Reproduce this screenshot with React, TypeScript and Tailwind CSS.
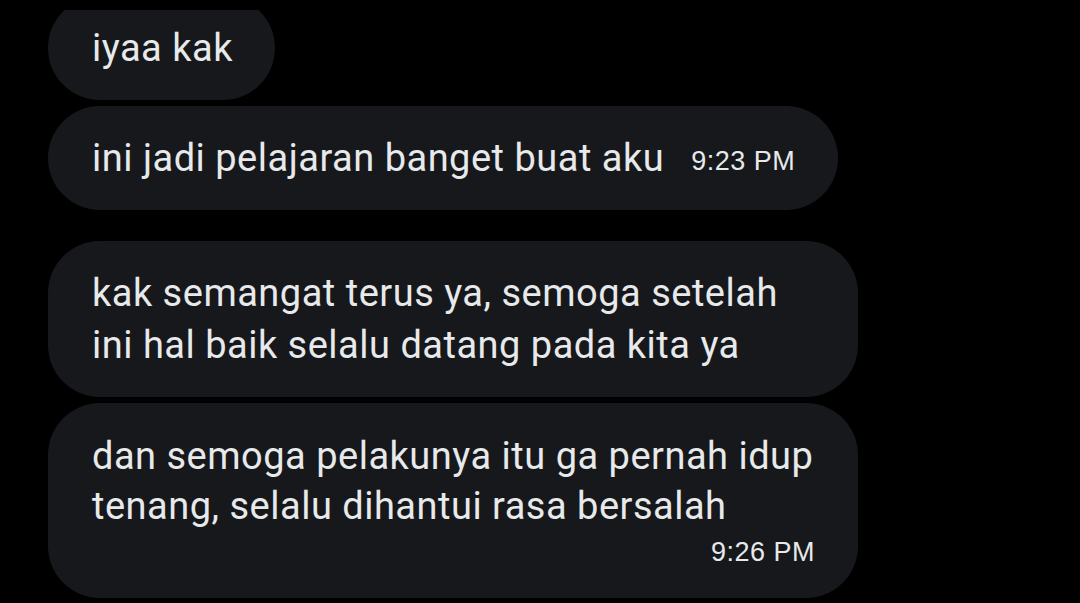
import React from 'react';

const Time: React.FC<{ t: string; className?: string }> = ({ t, className }) => (
  <span
    className={`text-[27px] leading-none text-[#e7e9ea] tracking-[0.5px] ${className ?? ''}`}
    style={{ fontFamily: '"Liberation Sans", Arial, sans-serif' }}
  >
    {t}
  </span>
);

export default function App() {
  return (
    <div
      className="w-[1080px] h-[603px] bg-black overflow-hidden pl-12 pt-[10px] text-[#e7e9ea]"
      style={{ fontFamily: 'Roboto, "Noto Sans", sans-serif' }}
    >
      {/* group 1 - first bubble is cut off at the top */}
      <div className="flex flex-col gap-[6px]">
        <div className="h-[90px] overflow-hidden">
          <div className="w-[227px] h-[104px] -mt-[14px] rounded-[52px] bg-[#16181c] flex items-center pl-11">
            <span className="text-[38px] leading-[52px] tracking-[0.5px]">iyaa kak</span>
          </div>
        </div>
        <div className="w-[790px] h-[104px] rounded-[52px] bg-[#16181c] flex items-center pl-11">
          <span className="text-[38px] leading-[52px] tracking-[0.5px]">ini jadi pelajaran banget buat aku</span>
          <Time t="9:23 PM" className="ml-[27px] mt-[6px]" />
        </div>
      </div>

      {/* group 2 */}
      <div className="flex flex-col gap-[6px] mt-[31px]">
        <div className="w-[810px] h-[156px] rounded-[52px] bg-[#16181c] pl-11 pt-[26px]">
          <p className="text-[38px] leading-[52px] tracking-[0.5px]">
            kak semangat terus ya, semoga setelah
            <br />
            ini hal baik selalu datang pada kita ya
          </p>
        </div>
        <div className="w-[810px] h-[195px] rounded-[52px] bg-[#16181c] pl-11 pr-[43px] pt-[28px] flex flex-col">
          <p className="text-[38px] leading-[50px] tracking-[0.5px]">
            dan semoga pelakunya itu ga pernah idup
            <br />
            tenang, selalu dihantui rasa bersalah
          </p>
          <div className="flex justify-end mt-[8px]">
            <Time t="9:26 PM" />
          </div>
        </div>
      </div>
    </div>
  );
}
